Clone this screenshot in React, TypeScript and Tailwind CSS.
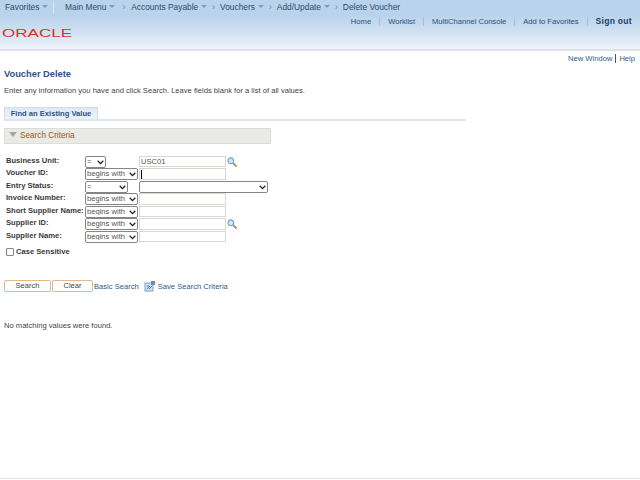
const font = { fontFamily: '"Liberation Sans", Arial, sans-serif' }

function Caret() {
  return <span className="ml-[3px] inline-block translate-y-[-1px] border-x-[3px] border-t-[3px] border-x-transparent border-t-[#7d99b8]" />
}

function Crumb({ label, caret = true }: { label: string; caret?: boolean }) {
  return (
    <span className="flex items-center">
      <span>{label}</span>
      {caret && <Caret />}
    </span>
  )
}

function Lookup() {
  return (
    <svg width="10" height="10" viewBox="0 0 11 11" className="ml-[1px]">
      <line x1="6.5" y1="6.5" x2="10.5" y2="10.5" stroke="#a9873f" strokeWidth="1.8" />
      <circle cx="4.2" cy="4.2" r="3.2" fill="#cfe6f6" stroke="#6fa0cb" strokeWidth="1.2" />
    </svg>
  )
}

function Select({ value, width }: { value: string; width: string }) {
  return (
    <div className={`relative ${width} h-[12px] shrink-0`}>
      <select defaultValue={value} className="h-full w-full appearance-none rounded-[2px] border border-[#858585] bg-white pl-[1px] text-[7.6px] leading-none text-[#555]">
        <option>{value}</option>
      </select>
      <svg width="7" height="5" viewBox="0 0 7 5" className="pointer-events-none absolute right-[2px] top-[4px]">
        <path d="M0.7 0.8L3.5 3.6L6.3 0.8" fill="none" stroke="#222" strokeWidth="1.3" />
      </svg>
    </div>
  )
}

function Row({ label, op, opWidth, children }: { label: string; op: string; opWidth: string; children?: React.ReactNode }) {
  return (
    <div className="flex h-[12.5px] items-center">
      <label className="w-[79px] shrink-0 -translate-y-[1px] whitespace-nowrap text-[7.6px] font-bold text-[#3a3a3a]">{label}</label>
      <Select value={op} width={opWidth} />
      {children}
    </div>
  )
}

function TextBox({ value, cursor }: { value?: string; cursor?: boolean }) {
  return (
    <div className="flex h-[11.5px] w-[87px] items-center border border-[#d8d8d0] bg-white pl-[1px] text-[7.6px] text-[#555]">
      {cursor && <span className="h-[9px] w-px bg-black" />}
      {value}
    </div>
  )
}

export default function App() {
  return (
    <div style={font} className="relative h-[480px] w-[640px] overflow-hidden bg-white text-[7.6px] text-[#444]">
      <div className="flex h-[14px] items-center bg-[#b9d3ec] pt-[1px] text-[8.4px] text-[#2f4a68]">
        <div className="flex h-full w-[54px] items-center border-r border-[#d5e3f2] pl-[5px]"><Crumb label="Favorites" /></div>
        <div className="flex items-center pl-[11px]">
          <Crumb label="Main Menu" />
          <span className="ml-[7px] mr-[6px] text-[#6b7f95]">›</span>
          <Crumb label="Accounts Payable" />
          <span className="ml-[5px] mr-[5px] text-[#6b7f95]">›</span>
          <Crumb label="Vouchers" />
          <span className="mx-[5px] text-[#6b7f95]">›</span>
          <Crumb label="Add/Update" />
          <span className="mx-[5px] text-[#6b7f95]">›</span>
          <Crumb label="Delete Voucher" caret={false} />
        </div>
      </div>

      <div className="flex h-[37px] justify-between border-b-2 border-[#dfe1ea] bg-gradient-to-b from-[#b7d2ec] via-[#d0e0f1] to-[#edf3fa]">
        <svg width="72" height="14" viewBox="0 0 72 14" className="ml-[2px] mt-[12px]">
          <text x="0" y="11" textLength="70" lengthAdjust="spacingAndGlyphs" fontSize="11.5" fill="#d9302a" fontFamily="Liberation Sans">ORACLE</text>
        </svg>
        <nav className="mr-[8px] mt-[3px] flex h-[9px] items-center text-[7.6px] text-[#1d4f80]">
          <span>Home</span>
          <span className="mx-[8px] h-[9px] w-px bg-[#a9c0d8]" />
          <span>Worklist</span>
          <span className="mx-[8px] h-[9px] w-px bg-[#a9c0d8]" />
          <span>MultiChannel Console</span>
          <span className="mx-[8px] h-[9px] w-px bg-[#a9c0d8]" />
          <span>Add to Favorites</span>
          <span className="mx-[8px] h-[9px] w-px bg-[#a9c0d8]" />
          <span className="text-[8.5px] font-bold tracking-[0.3px] text-[#153f6e]">Sign out</span>
        </nav>
      </div>

      <div className="mr-[5px] mt-[2px] flex items-center justify-end text-[7.6px] text-[#2f5a88]">
        <span>New Window</span>
        <span className="mx-[3px] h-[9px] w-px bg-[#555]" />
        <span>Help</span>
      </div>

      <h1 className="ml-[4px] mt-[4px] text-[9.3px] font-bold leading-[12px] text-[#2f5288]">Voucher Delete</h1>
      <p className="ml-[4px] mt-[6px] text-[7.6px] leading-[10px]">Enter any information you have and click Search. Leave fields blank for a list of all values.</p>

      <div className="ml-[4px] mt-[11px] w-[462px] border-b-2 border-[#dbe6f2]">
        <div className="flex h-[12px] w-[94px] items-center justify-center border border-b-0 border-[#d0dcea] bg-gradient-to-b from-[#dfe9f4] to-[#eef3f9] text-[7.6px] font-bold text-[#2f5288]">
          Find an Existing Value
        </div>
      </div>

      <div className="ml-[4px] mt-[7px] flex h-[16px] w-[267px] items-center border border-[#dcddd6] bg-[#e9eae5] pl-[4px] text-[8.2px] text-[#9a5a1c]">
        <span className="mr-[3px] -translate-y-[2px] border-x-[4px] border-t-[5px] border-x-transparent border-t-[#a5a5a5]" />
        Search Criteria
      </div>

      <div className="ml-[6px] mt-[11px]">
        <Row label="Business Unit:" op="=" opWidth="w-[21px]">
          <div className="ml-[33px] flex items-center"><TextBox value="USC01" /><Lookup /></div>
        </Row>
        <Row label="Voucher ID:" op="begins with" opWidth="w-[53px]">
          <div className="ml-[1px]"><TextBox cursor /></div>
        </Row>
        <Row label="Entry Status:" op="=" opWidth="w-[43px]">
          <div className="ml-[11px]"><Select value="" width="w-[129px]" /></div>
        </Row>
        <Row label="Invoice Number:" op="begins with" opWidth="w-[53px]">
          <div className="ml-[1px]"><TextBox /></div>
        </Row>
        <Row label="Short Supplier Name:" op="begins with" opWidth="w-[53px]">
          <div className="ml-[1px]"><TextBox /></div>
        </Row>
        <Row label="Supplier ID:" op="begins with" opWidth="w-[53px]">
          <div className="ml-[1px] flex items-center"><TextBox /><Lookup /></div>
        </Row>
        <Row label="Supplier Name:" op="begins with" opWidth="w-[53px]">
          <div className="ml-[1px]"><TextBox /></div>
        </Row>
        <div className="mt-[3px] flex items-center text-[7.6px] font-bold text-[#3a3a3a]">
          <span className="mr-[2px] h-[8px] w-[8px] rounded-[1px] border border-[#858585] bg-white" />
          Case Sensitive
        </div>
      </div>

      <div className="ml-[4px] mt-[23px] flex items-center text-[7.6px]">
        <button className="h-[12px] w-[47px] rounded-[2px] border border-[#e3b98c] bg-white leading-none text-[#444]">Search</button>
        <button className="ml-[1px] h-[12px] w-[41px] rounded-[2px] border border-[#e3b98c] bg-white leading-none text-[#444]">Clear</button>
        <span className="ml-[1px] text-[#2f5a88]">Basic Search</span>
        <svg width="12" height="12" viewBox="0 0 12 12" className="ml-[5px]">
          <rect x="1" y="3" width="8" height="8" fill="#cfe0ef" stroke="#7c9fc0" />
          <path d="M3 9l3-3M5 9l3-3M3 6h2" stroke="#4d7ba6" />
          <rect x="7" y="1" width="4" height="4" fill="#5d8fbd" />
        </svg>
        <span className="ml-[2px] text-[#2f5a88]">Save Search Criteria</span>
      </div>

      <p className="ml-[4px] mt-[29px] text-[7.6px] leading-[10px]">No matching values were found.</p>

      <div className="absolute bottom-[1px] left-0 h-px w-full bg-[#e4e4e4]" />
    </div>
  )
}
